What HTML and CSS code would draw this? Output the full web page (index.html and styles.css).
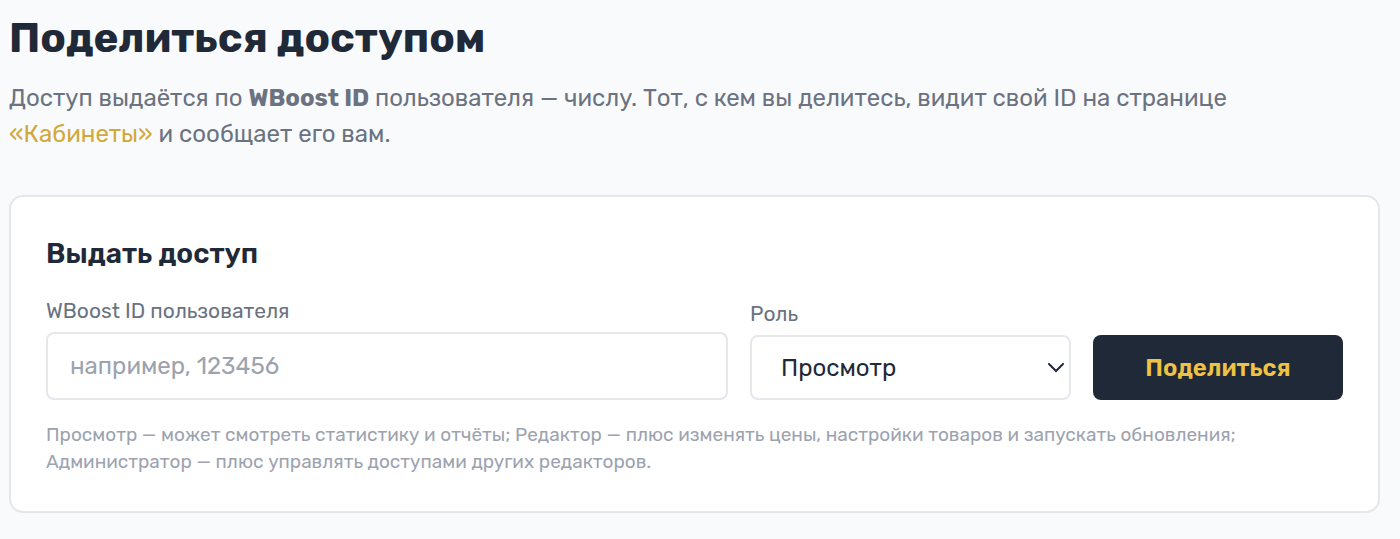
FILE: index.html
```html
<!DOCTYPE html>
<html lang="ru">
<head>
  <meta charset="UTF-8">
  <meta name="viewport" content="width=device-width, initial-scale=1.0">
  <title>Поделиться доступом</title>
  <link rel="stylesheet" href="styles.css">
</head>
<body>

<header class="page-header">
  <h1>Поделиться доступом</h1>
  <p>Доступ выдаётся по <strong>WBoost ID</strong> пользователя — числу. Тот, с кем вы делитесь, видит свой ID на странице <a href="#">«Кабинеты»</a> и сообщает его вам.</p>
</header>

<section class="card">
  <h2>Выдать доступ</h2>
  <form class="share-form">
    <div class="field field-id">
      <label for="userId">WBoost ID пользователя</label>
      <input type="text" id="userId" name="user_id" inputmode="numeric" placeholder="например, 123456">
    </div>
    <div class="field field-role">
      <label for="role">Роль</label>
      <div class="select-wrap">
        <select id="role" name="role">
          <option value="viewer">Просмотр</option>
          <option value="editor">Редактор</option>
          <option value="admin">Администратор</option>
        </select>
        <svg class="chevron" viewBox="0 0 16 10" aria-hidden="true"><path d="M1 1l7 7 7-7"/></svg>
      </div>
    </div>
    <button type="submit">Поделиться</button>
  </form>
  <p class="hint">Просмотр — может смотреть статистику и отчёты; Редактор — плюс изменять цены, настройки товаров и запускать обновления; Администратор — плюс управлять доступами других редакторов.</p>
</section>

</body>
</html>
```

FILE: styles.css
```css
* {
  box-sizing: border-box;
}
body {
  font-family: Rubik, Roboto, "Noto Sans", sans-serif;
  background-color: #f9fafc;
  margin: 0;
  padding: 12px 20px 24px 9px;
  color: #1f2937;
}
h1 {
  margin: 0 0 16px;
  font-size: 42px;
  line-height: 52px;
  font-weight: 700;
}
.page-header p {
  margin: 0;
  max-width: 1300px;
  font-size: 24px;
  line-height: 36px;
  color: #6b7280;
}
.page-header a {
  color: #d1a93a;
  text-decoration: none;
}
.card {
  margin-top: 43px;
  padding: 39px 35px 36px;
  background-color: #fff;
  border: 2px solid #e5e7eb;
  border-radius: 14px;
}
h2 {
  margin: 0 0 25px;
  font-size: 28px;
  line-height: 36px;
  font-weight: 600;
}
.share-form {
  display: flex;
  align-items: flex-end;
  gap: 22px;
}
.field label {
  display: block;
  margin-bottom: 7px;
  font-size: 21px;
  line-height: 28px;
  color: #6b7280;
}
.field-id {
  flex: 1;
}
.field-role {
  width: 321px;
}
input, select {
  display: block;
  width: 100%;
  border: 2px solid #e5e7eb;
  border-radius: 8px;
  background-color: #fff;
  color: #1f2937;
  font-family: inherit;
  font-size: 24px;
}
input {
  height: 68px;
  padding: 0 22px;
}
input::placeholder {
  color: #9ca3af;
}
select {
  height: 65px;
  padding: 0 44px 0 29px;
  appearance: none;
}
.select-wrap {
  position: relative;
}
.chevron {
  position: absolute;
  top: 28px;
  right: 7px;
  width: 16px;
  height: 10px;
  fill: none;
  stroke: #1f2937;
  stroke-width: 2;
  stroke-linecap: round;
  pointer-events: none;
}
button {
  width: 250px;
  height: 65px;
  border: none;
  border-radius: 8px;
  background-color: #1f2937;
  color: #eec244;
  font-family: inherit;
  font-size: 24px;
  font-weight: 600;
  cursor: pointer;
}
.hint {
  margin: 21px 0 0;
  max-width: 1240px;
  font-size: 19px;
  line-height: 27px;
  color: #9ca3af;
}
```
